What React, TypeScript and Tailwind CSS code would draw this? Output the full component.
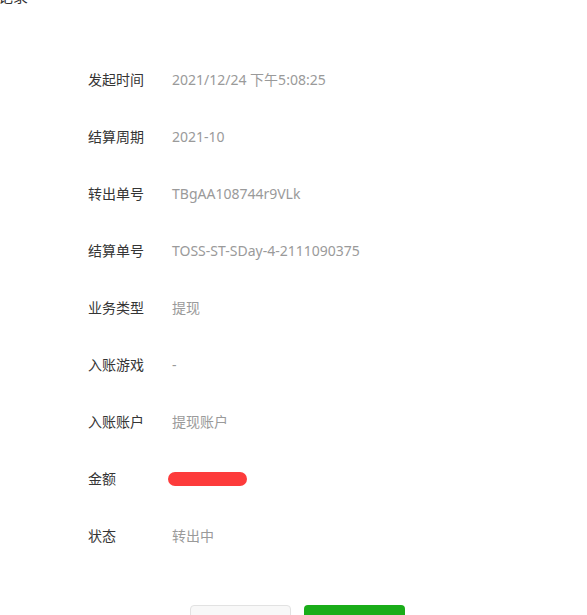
const rows: { label: string; value: string; blot?: boolean }[] = [
  { label: '发起时间', value: '2021/12/24 下午5:08:25' },
  { label: '结算周期', value: '2021-10' },
  { label: '转出单号', value: 'TBgAA108744r9VLk' },
  { label: '结算单号', value: 'TOSS-ST-SDay-4-2111090375' },
  { label: '业务类型', value: '提现' },
  { label: '入账游戏', value: '-' },
  { label: '入账账户', value: '提现账户' },
  { label: '金额', value: '', blot: true },
  { label: '状态', value: '转出中' },
];

export default function App() {
  return (
    <div className="min-h-screen bg-white overflow-hidden font-['Noto_Sans','Noto_Sans_CJK_SC',sans-serif]">
      {/* page title, scrolled mostly out of view */}
      <div className="flex h-[51px] items-start">
        <h1 className="-mt-[11px] -ml-[32px] text-[15px] leading-[15px] text-[#333]">转出记录</h1>
      </div>

      <div className="pl-[88px]">
        {rows.map((row) => (
          <div key={row.label} className="flex h-[57px] items-center text-[14px]">
            <span className="w-[84px] shrink-0 text-[#353535]">{row.label}</span>
            {row.blot ? (
              <span className="-ml-[4px] block h-[14px] w-[79px] rounded-full bg-[#fd3b3b]" />
            ) : (
              <span className="text-[#9a9a9a]">{row.value}</span>
            )}
          </div>
        ))}
      </div>

      <div className="mt-[41px] flex justify-center gap-[13px] pl-[8px]">
        <button className="h-[40px] w-[101px] rounded-[4px] border border-[#e2e2e2] bg-[#f8f8f8] text-[15px] text-[#333]">
          返回
        </button>
        <button className="h-[40px] w-[101px] rounded-[4px] bg-[#1aad19] text-[15px] text-white">
          确定
        </button>
      </div>
    </div>
  );
}
